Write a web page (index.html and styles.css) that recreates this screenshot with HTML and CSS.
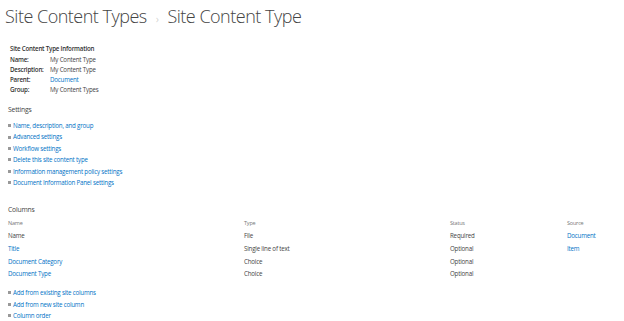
FILE: index.html
```html
<!DOCTYPE html>
<html lang="en">
<head>
    <meta charset="UTF-8">
    <title>Site Content Type</title>
    <link rel="stylesheet" href="styles.css">
</head>
<body>

<!-- Breadcrumb title -->
<h1 class="page-title">
    <span>Site Content Types</span>
    <span class="crumb-sep">&#8250;</span>
    <span>Site Content Type</span>
</h1>

<!-- Content type info -->
<div class="info">
    <div class="info-heading">Site Content Type Information</div>
    <div class="info-row"><span class="info-label">Name:</span><span>My Content Type</span></div>
    <div class="info-row"><span class="info-label">Description:</span><span>My Content Type</span></div>
    <div class="info-row"><span class="info-label">Parent:</span><a href="#">Document</a></div>
    <div class="info-row"><span class="info-label">Group:</span><span>My Content Types</span></div>
</div>

<!-- Settings links -->
<div class="section-title">Settings</div>
<ul class="link-list">
    <li><a href="#">Name, description, and group</a></li>
    <li><a href="#">Advanced settings</a></li>
    <li><a href="#">Workflow settings</a></li>
    <li><a href="#">Delete this site content type</a></li>
    <li><a href="#">Information management policy settings</a></li>
    <li><a href="#">Document Information Panel settings</a></li>
</ul>

<!-- Columns -->
<div class="section-title columns-title">Columns</div>
<table class="columns-table">
    <thead>
        <tr>
            <th class="col-name">Name</th>
            <th class="col-type">Type</th>
            <th class="col-status">Status</th>
            <th>Source</th>
        </tr>
    </thead>
    <tbody>
        <tr>
            <td>Name</td>
            <td>File</td>
            <td>Required</td>
            <td><a href="#">Document</a></td>
        </tr>
        <tr>
            <td><a href="#">Title</a></td>
            <td>Single line of text</td>
            <td>Optional</td>
            <td><a href="#">Item</a></td>
        </tr>
        <tr>
            <td><a href="#">Document Category</a></td>
            <td>Choice</td>
            <td>Optional</td>
            <td></td>
        </tr>
        <tr>
            <td><a href="#">Document Type</a></td>
            <td>Choice</td>
            <td>Optional</td>
            <td></td>
        </tr>
    </tbody>
</table>

<ul class="link-list bottom-links">
    <li><a href="#">Add from existing site columns</a></li>
    <li><a href="#">Add from new site column</a></li>
    <li><a href="#">Column order</a></li>
</ul>

</body>
</html>
```

FILE: styles.css
```css
body {
    margin: 0;
    background: #fff;
    color: #444;
    font-family: "Open Sans", "Liberation Sans", sans-serif;
    font-size: 6.2px;
    letter-spacing: -0.2px;
}

a {
    color: #0072c6;
    text-decoration: none;
}

/* Breadcrumb title */
.page-title {
    margin: 0;
    padding: 2px 0 0 5px;
    font-size: 18px;
    font-weight: 300;
    letter-spacing: -0.5px;
    line-height: 28px;
    color: #444;
    white-space: nowrap;
}
.crumb-sep {
    color: #bbb;
    font-size: 11px;
    margin: 0 5px;
}

/* Info block */
.info {
    margin: 9px 0 0 10px;
}
.info-heading {
    font-weight: 600;
    color: #333;
    line-height: 13px;
}
.info-row {
    display: flex;
    line-height: 10px;
}
.info-label {
    width: 40px;
    font-weight: 600;
    color: #333;
}

/* Section headings */
.section-title {
    margin: 9px 0 0 8px;
    font-size: 6.8px;
    line-height: 12px;
    color: #444;
}
.columns-title {
    margin-top: 16px;
}

/* Bulleted links */
.link-list {
    list-style: none;
    margin: 4px 0 0 0;
    padding: 0 0 0 8px;
}
.link-list li {
    display: flex;
    align-items: center;
    line-height: 11.4px;
}
.link-list li::before {
    content: "";
    width: 3px;
    height: 3px;
    background: #999;
    margin-right: 2px;
}

/* Columns table */
.columns-table {
    border-collapse: collapse;
    margin: 1px 0 0 8px;
    width: 616px;
}
.columns-table th,
.columns-table td {
    padding: 0;
    text-align: left;
    vertical-align: middle;
}
.columns-table th {
    font-weight: 400;
    font-size: 5.5px;
    color: #777;
    height: 12px;
}
.columns-table td {
    height: 12.7px;
}
.col-name {
    width: 236px;
}
.col-type {
    width: 206px;
}
.col-status {
    width: 117px;
}

.bottom-links {
    margin-top: 7px;
}
```
